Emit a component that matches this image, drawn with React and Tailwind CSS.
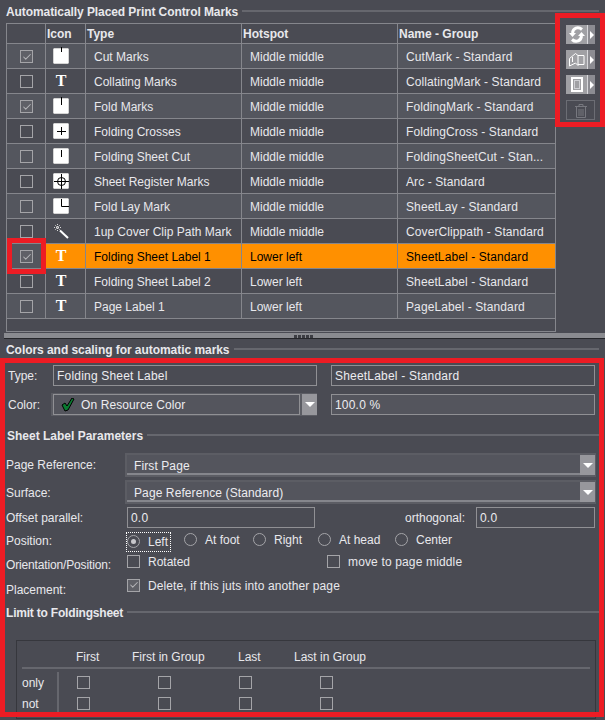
import { Check } from 'lucide-react'

const ROWS = [
  { on: true, icon: 'cut', type: 'Cut Marks', hot: 'Middle middle', name: 'CutMark - Standard' },
  { icon: 'T', type: 'Collating Marks', hot: 'Middle middle', name: 'CollatingMark - Standard' },
  { on: true, icon: 'fold', type: 'Fold Marks', hot: 'Middle middle', name: 'FoldingMark - Standard' },
  { icon: 'cross', type: 'Folding Crosses', hot: 'Middle middle', name: 'FoldingCross - Standard' },
  { icon: 'sheetcut', type: 'Folding Sheet Cut', hot: 'Middle middle', name: 'FoldingSheetCut - Stan...' },
  { icon: 'register', type: 'Sheet Register Marks', hot: 'Middle middle', name: 'Arc - Standard' },
  { icon: 'lay', type: 'Fold Lay Mark', hot: 'Middle middle', name: 'SheetLay - Standard' },
  { icon: 'wand', type: '1up Cover Clip Path Mark', hot: 'Middle middle', name: 'CoverClippath - Standard' },
  { on: true, selected: true, icon: 'T', type: 'Folding Sheet Label 1', hot: 'Lower left', name: 'SheetLabel - Standard' },
  { icon: 'T', type: 'Folding Sheet Label 2', hot: 'Lower left', name: 'SheetLabel - Standard' },
  { icon: 'T', type: 'Page Label 1', hot: 'Lower left', name: 'PageLabel - Standard' },
]

function CheckBox({ on, className = '' }) {
  return (
    <span className={`flex h-[13px] w-[13px] shrink-0 items-center justify-center border border-[#a4a4a8] ${on ? 'bg-[#5f6067]' : ''} ${className}`}>
      {on && <Check size={10} strokeWidth={2.5} className="text-[#b4b4b8]" />}
    </span>
  )
}

function MarkIcon({ kind }) {
  if (kind === 'T') {
    return <span className="w-[16px] text-center font-['Liberation_Serif',serif] text-[16px] leading-none font-bold text-white">T</span>
  }
  if (kind === 'wand') {
    return (
      <svg width="16" height="16" viewBox="0 0 16 16">
        <path d="M7 7.500l8 7.500" stroke="#fff" strokeWidth="2" />
        <path d="M4.500 1v7M1 4.500h7M2 2l5 5M7 2L2 7" stroke="#d8d8d8" strokeWidth="1" strokeDasharray="1 1" />
      </svg>
    )
  }
  return (
    <svg width="17" height="20" viewBox="0 0 17 20">
      <rect x="0" y="2" width="16" height="16" fill="#fff" />
      <path d="M1 2.500h14M1 17.500h14M.5 3v14M15.500 3v14" stroke="#d4d4d4" />
      <path d="M0 2h1v1H0zM15 2h1v1h-1zM0 17h1v1H0zM15 17h1v1h-1z" fill="#8a8a90" />
      {kind === 'cut' && <path d="M8.500 1v5" stroke="#000" />}
      {kind === 'fold' && <path d="M8.500 1v8" stroke="#000" />}
      {kind === 'cross' && <path d="M8.500 6v8M4 10.500h9" stroke="#000" />}
      {kind === 'sheetcut' && <path d="M8.500 4v7" stroke="#000" />}
      {kind === 'register' && (
        <>
          <circle cx="8.500" cy="10.500" r="4" fill="none" stroke="#000" />
          <path d="M8.500 3v15M1 10.500h15" stroke="#000" />
        </>
      )}
      {kind === 'lay' && <path d="M8.500 3v7.500H16" fill="none" stroke="#000" />}
    </svg>
  )
}

function MarksTable() {
  return (
    <div className="ml-[6px] h-[309px] w-[550px] border border-[#85868c]">
      <div className="flex h-[20px] border-b border-[#85868c] text-[12px] leading-[21px] font-bold text-[#e8e8ec]">
        <div className="w-[39px] border-r border-[#85868c]" />
        <div className="w-[40px] border-r border-[#85868c] pl-px">Icon</div>
        <div className="w-[156px] border-r border-[#85868c] pl-px">Type</div>
        <div className="w-[156px] border-r border-[#85868c] pl-px">Hotspot</div>
        <div className="flex-1 pl-px">Name - Group</div>
      </div>
      {ROWS.map((row, i) => {
        const base = i % 2 === 0 ? 'bg-[#54565e]' : 'bg-[#4a4b53]'
        const bg = row.selected ? 'bg-[#ff9000] text-black' : `${base} text-[#e8e8ec]`
        return (
          <div key={row.type} className="flex h-[25px] border-b border-[#85868c] text-[12px]">
            <div className={`flex w-[39px] items-center justify-center border-r border-[#85868c] pt-px pl-px ${base}`}>
              <CheckBox on={row.on} />
            </div>
            <div className={`flex w-[40px] items-center border-r border-[#85868c] pl-[7px] ${bg}`}>
              <MarkIcon kind={row.icon} />
            </div>
            <div className={`flex w-[156px] items-center border-r border-[#85868c] pt-px pl-2 ${bg}`}>{row.type}</div>
            <div className={`flex w-[156px] items-center border-r border-[#85868c] pt-px pl-2 ${bg}`}>{row.hot}</div>
            <div className={`flex flex-1 items-center pt-px pl-2 tracking-[0.1px] ${bg}`}>{row.name}</div>
          </div>
        )
      })}
    </div>
  )
}

function ToolButton({ children, disabled }) {
  if (disabled) {
    return <div className="flex h-[20px] w-[29px] items-center justify-center border border-[#6c6d74]">{children}</div>
  }
  return (
    <div className="flex h-[19px] w-[29px] bg-[#8c8c92]">
      <div className="flex w-[22px] items-center justify-center border-r border-[#d8d8dc] bg-[#a0a0a4]">{children}</div>
      <div className="flex flex-1 items-center justify-center">
        <span className="h-0 w-0 border-y-[4px] border-l-[4px] border-y-transparent border-l-white" />
      </div>
    </div>
  )
}

function Toolbar() {
  return (
    <div className="ml-[10px] flex flex-col gap-[6px] pt-[2px]">
      <ToolButton>
        <svg width="16" height="17" viewBox="0 0 16 17" fill="none" stroke="#fff" strokeWidth="3">
          <path d="M13 3.500C9 0 4 2 3.500 7" />
          <path d="M3 13.500C7 17 12 15 12.500 10" />
          <path d="M0 7h7L3.500 11zM16 10H9l3.500-4z" fill="#fff" stroke="none" />
        </svg>
      </ToolButton>
      <ToolButton>
        <svg width="16" height="15" viewBox="0 0 16 15" fill="none" stroke="#fff">
          <path d="M.500 6.500l6-5 2.500 2v10l-2.500-2.500-6 3zM9 3.500h6v9H9M3.500 5v5" />
        </svg>
      </ToolButton>
      <ToolButton>
        <svg width="12" height="15" viewBox="0 0 12 15" fill="none" stroke="#fff">
          <rect x="1" y="1" width="10" height="13" strokeWidth="2" />
          <rect x="3.500" y="3.500" width="5" height="8" stroke="#d0d0d4" />
        </svg>
      </ToolButton>
      <ToolButton disabled>
        <svg width="12" height="15" viewBox="0 0 12 15" fill="none" stroke="#77787f">
          <path d="M0 3.500h12M4 3V1.500h4V3M1.500 4v10.500h9V4M4 6v7M6 6v7M8 6v7" />
        </svg>
      </ToolButton>
    </div>
  )
}

function SectionTitle({ children, className = '', textClass = '' }) {
  return (
    <div className={`flex items-center gap-[4px] text-[12px] font-bold text-[#e8e8ec] ${className}`}>
      <span className={`whitespace-nowrap pt-[2px] ${textClass}`}>{children}</span>
      <span className="h-[2px] flex-1 bg-[#66676e]" />
    </div>
  )
}

function Field({ value, className = '', light }) {
  return (
    <div className={`flex h-[21px] items-center border border-[#909094] pt-px pl-[3px] text-[12px] tracking-[0.2px] text-[#ececf0] ${light ? 'bg-[#54555d]' : 'bg-[#4a4b53]'} ${className}`}>
      {value}
    </div>
  )
}

function Arrow() {
  return (
    <span className="flex w-[15px] items-center justify-center bg-[#97979c]">
      <span className="h-0 w-0 border-x-[5px] border-t-[5px] border-x-transparent border-t-white" />
    </span>
  )
}

function WideCombo({ value }) {
  return (
    <div className="ml-[125px] flex h-[24px] w-[471px] items-stretch bg-[#5c5d64] py-[2px] pr-px pl-[2px] text-[12px]">
      <div className="flex flex-1 items-center border-b-2 border-[#85868c] bg-[#54555d] pt-[3px] pl-[7px] tracking-[0.1px] text-[#ececf0]">{value}</div>
      <Arrow />
    </div>
  )
}

function Radio({ on, label, w }) {
  return (
    <div className={w}>
      <span className="relative inline-flex items-center">
        <span className="flex h-[13px] w-[13px] items-center justify-center rounded-full border border-[#a4a4a8]">
          {on && <span className="h-[5px] w-[5px] rounded-full bg-[#c8c8cc]" />}
        </span>
        <span className="ml-[8px]">{label}</span>
        {on && <span className="absolute -inset-y-px -right-[3px] -left-px border border-dotted border-white" />}
      </span>
    </div>
  )
}

function Label({ children, className = '' }) {
  return <div className={`w-[121px] shrink-0 text-[12px] text-[#e8e8ec] ${className}`}>{children}</div>
}

function LimitTable() {
  return (
    <div className="mt-[21px] ml-[16px] h-[79px] w-[580px] border border-[#36373d] px-[5px] text-[12px] text-[#e8e8ec]">
      <div className="flex h-[28px] items-end border-b-2 border-[#66676e] pb-px">
        <div className="ml-[54px] w-[56px]">First</div>
        <div className="w-[106px]">First in Group</div>
        <div className="w-[56px]">Last</div>
        <div>Last in Group</div>
      </div>
      <div className="mt-[3px]">
        {['only', 'not'].map((row) => (
          <div key={row} className="flex h-[21px] items-center">
            <div className="flex h-full w-[37px] items-center border-r-2 border-[#66676e]">{row}</div>
            {[0, 1, 2, 3].map((i) => (
              <div key={i} className="w-[81px] pl-[18px]">
                <CheckBox />
              </div>
            ))}
          </div>
        ))}
      </div>
    </div>
  )
}

export default function App() {
  return (
    <div className="relative h-[720px] w-[605px] overflow-hidden bg-[#4a4b53] font-['Liberation_Sans',Arial,sans-serif]">
      <SectionTitle className="h-[23px] pr-[6px] pb-px pl-[6px]" textClass="tracking-[-0.08px]">Automatically Placed Print Control Marks</SectionTitle>
      <div className="flex">
        <MarksTable />
        <Toolbar />
      </div>

      {/* splitter */}
      <div className="mt-px ml-[4px] flex h-[6px] items-center justify-center gap-[1px] border-b border-[#25262a] bg-[#8a8b90] pt-[2px] pr-[2px]">
        {[0, 1, 2, 3, 4].map((i) => (
          <span key={i} className="h-[3px] w-[3px] bg-[#3c3d43]" />
        ))}
      </div>

      <SectionTitle className="mt-[3px] h-[14px] px-[6px]" textClass="tracking-[-0.05px]">Colors and scaling for automatic marks</SectionTitle>

      <div className="mt-[9px] flex items-center">
        <Label className="!w-[53px] pl-[8px]">Type:</Label>
        <Field value="Folding Sheet Label" className="w-[264px]" />
        <Field value="SheetLabel - Standard" className="ml-[14px] w-[264px]" />
      </div>

      <div className="mt-[7px] flex items-center">
        <Label className="!w-[51px] pl-[8px]">Color:</Label>
        <div className="flex h-[23px] w-[266px] bg-[#5c5d64] py-px pl-[2px]">
          <div className="flex flex-1 items-center gap-[6px] border border-[#909094] bg-[#54555d] pt-px pl-[7px] text-[12px] tracking-[0.1px] text-[#ececf0]">
            <svg width="14" height="14" viewBox="0 0 14 14">
              <path d="M1 7l3 6 3-1 6-11-2-1-5 8-2-3z" fill="#0a7a30" stroke="#000" />
            </svg>
            On Resource Color
          </div>
          <span className="ml-[2px] flex"><Arrow /></span>
        </div>
        <Field light value="100.0 %" className="ml-[14px] w-[264px]" />
      </div>

      <SectionTitle className="mt-[12px] h-[14px] pr-[6px] pl-[7px]">Sheet Label Parameters</SectionTitle>

      <div className="relative mt-[11px]">
        <WideCombo value="First Page" />
        <Label className="absolute top-[3px] left-[6px]">Page Reference:</Label>
      </div>
      <div className="relative mt-[3px]">
        <WideCombo value="Page Reference (Standard)" />
        <Label className="absolute top-[4px] left-[6px]">Surface:</Label>
      </div>

      <div className="mt-[3px] flex items-center pl-[6px] text-[12px] text-[#e8e8ec]">
        <Label>Offset parallel:</Label>
        <Field value="0.0" className="w-[188px]" />
        <span className="ml-[90px] w-[71px] pt-px">orthogonal:</span>
        <Field value="0.0" className="w-[119px]" />
      </div>

      <div className="mt-[5px] flex h-[16px] items-center pl-[6px] text-[12px] text-[#e8e8ec]">
        <Label>Position:</Label>
        <Radio on label="Left" w="w-[57px]" />
        <Radio label="At foot" w="w-[69px]" />
        <Radio label="Right" w="w-[65px]" />
        <Radio label="At head" w="w-[77px]" />
        <Radio label="Center" />
      </div>

      <div className="mt-[4px] flex h-[16px] items-center pl-[6px] text-[12px] text-[#e8e8ec]">
        <Label className="pt-[8px] tracking-[-0.15px]">Orientation/Position:</Label>
        <CheckBox />
        <span className="ml-[8px] w-[179px] pt-px">Rotated</span>
        <CheckBox />
        <span className="ml-[8px] pt-px tracking-[0.15px]">move to page middle</span>
      </div>

      <div className="mt-[8px] flex h-[16px] items-center pl-[6px] text-[12px] text-[#e8e8ec]">
        <Label className="pt-[10px]">Placement:</Label>
        <CheckBox on />
        <span className="ml-[8px] pt-px tracking-[0.1px]">Delete, if this juts into another page</span>
      </div>

      <SectionTitle className="mt-[12px] h-[14px] px-[6px]" textClass="tracking-[-0.2px]">Limit to Foldingsheet</SectionTitle>
      <LimitTable />

      {/* red highlight frames */}
      <div className="absolute top-[13px] left-[555px] h-[114px] w-[50px] border-[5px] border-[#ed1c24]" />
      <div className="absolute top-[238px] left-[7px] h-[36px] w-[39px] border-[5px] border-[#ed1c24]" />
      <div className="absolute top-[358px] left-0 h-[359px] w-[604px] border-[5px] border-[#ed1c24]" />
    </div>
  )
}
